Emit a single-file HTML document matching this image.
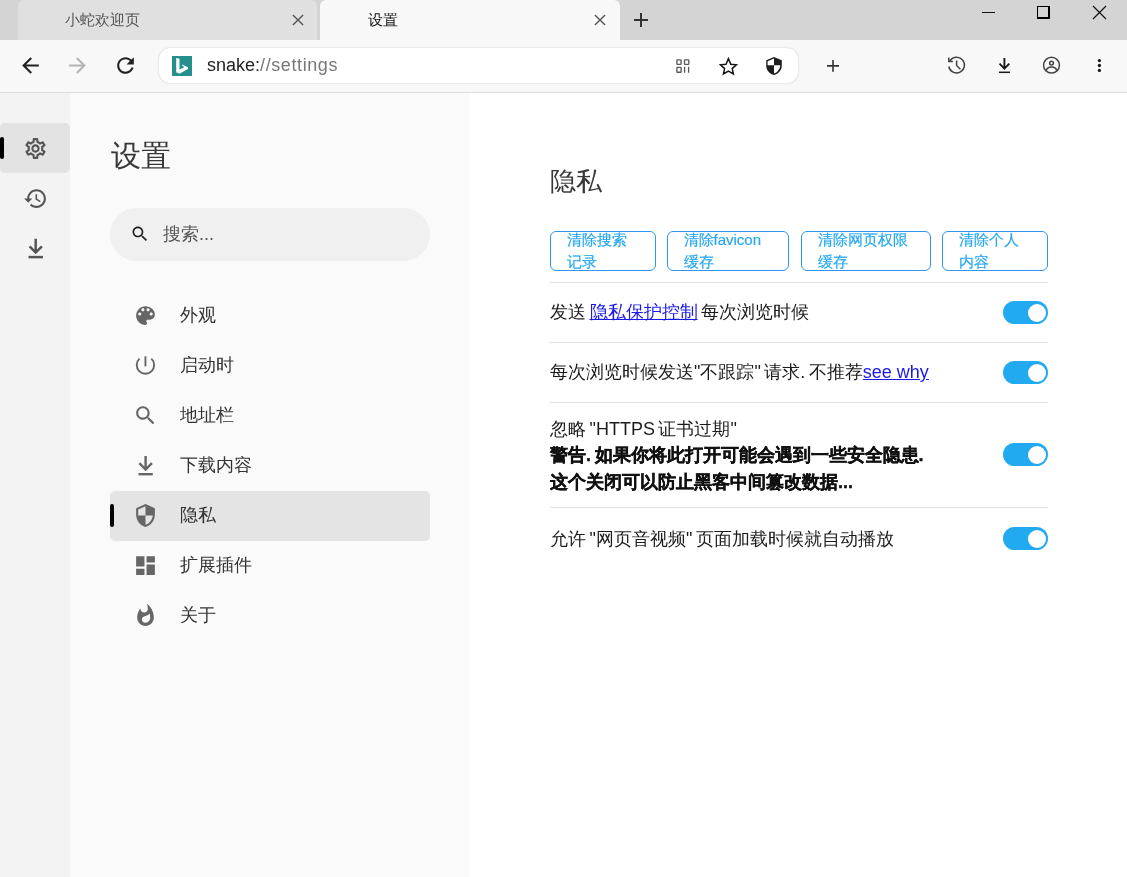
<!DOCTYPE html>
<html><head><meta charset="utf-8">
<style>
html,body{margin:0;padding:0;}
body{width:1127px;height:877px;overflow:hidden;position:relative;background:#fff;font-family:"Liberation Sans",sans-serif;}
.a{position:absolute;}
svg.a{display:block;}
#tabs{left:0;top:0;width:1127px;height:40px;background:#d4d4d4;}
.tab{top:0;height:40px;border-radius:6px 6px 0 0;}
#toolbar{left:0;top:40px;width:1127px;height:52px;background:#f8f8f8;border-bottom:1px solid #dcdcdc;}
#omni{left:159px;top:47.5px;width:639px;height:35.5px;background:#fff;border-radius:11px;box-shadow:0 0 3px rgba(0,0,0,.10),0 0 1px rgba(0,0,0,.18);}
#rail{left:0;top:93px;width:70px;height:784px;background:#f3f3f3;}
#side{left:70px;top:93px;width:400px;height:784px;background:#fafafa;}
.txt,.rtxt,.btn{white-space:nowrap;will-change:transform;}
.item{left:180px;font-size:18px;color:#333;line-height:20px;}
.row{left:550px;width:498px;border-top:1px solid #e0e0e0;}
.tog{left:1003px;width:45px;height:23px;border-radius:12px;background:#21aaf0;}
.tog::after{content:"";position:absolute;right:2px;top:2.5px;width:18.5px;height:18.5px;border-radius:50%;background:#fff;}
.btn{top:231px;height:38px;border:1px solid #2f96ec;border-radius:6px;color:#25a8f0;font-size:15px;line-height:21.5px;box-sizing:content-box;}
.btn span{position:absolute;left:15.5px;top:-3px;white-space:nowrap;-webkit-text-stroke:0.2px #25a8f0;}
.rtxt{font-size:18px;color:#1c1c1c;line-height:26px;white-space:nowrap;word-spacing:-1.5px;}
a{color:#1a1ae6;word-spacing:normal;}
.rtxt b{color:#111;-webkit-text-stroke:0.35px #111;}
</style></head><body>
<div id="tabs" class="a"></div>
<div class="a tab" style="left:18px;width:299px;background:#e0e0e0;"></div>
<div class="a tab" style="left:320px;width:300px;background:#f8f8f8;"></div>
<div class="a txt" style="left:65px;top:10px;font-size:15px;line-height:20px;color:#555;">小蛇欢迎页</div>
<div class="a txt" style="left:368px;top:10px;font-size:15px;line-height:20px;color:#111;">设置</div>
<svg class="a" style="left:291.5px;top:14px" width="12" height="12" viewBox="0 0 12 12"><path d="M0.9 0.9L11.1 11.1M11.1 0.9L0.9 11.1" stroke="#555" stroke-width="1.4"/></svg>
<svg class="a" style="left:594px;top:14px" width="12" height="12" viewBox="0 0 12 12"><path d="M0.9 0.9L11.1 11.1M11.1 0.9L0.9 11.1" stroke="#555" stroke-width="1.4"/></svg>
<svg class="a" style="left:633px;top:12px" width="16" height="16" viewBox="0 0 16 16"><path d="M8 1V15M1 8H15" stroke="#333" stroke-width="2"/></svg>
<!-- window controls -->
<svg class="a" style="left:981px;top:5px" width="16" height="16" viewBox="0 0 16 16"><path d="M1 7.5H14" stroke="#111" stroke-width="1"/></svg>
<div class="a" style="left:1037px;top:6px;width:10px;height:10px;border:1px solid #000;border-right-width:2.5px;border-bottom-width:2.5px;"></div>
<svg class="a" style="left:1092px;top:5px" width="16" height="16" viewBox="0 0 16 16"><path d="M1 1L14 14M14 1L1 14" stroke="#111" stroke-width="1.2"/></svg>

<div id="toolbar" class="a"></div>
<div id="omni" class="a"></div>

<!-- toolbar icons -->
<svg class="a" style="left:18px;top:53px" width="25" height="25" viewBox="0 0 24 24"><path fill="#222" d="M20 11H7.83l5.59-5.59L12 4l-8 8 8 8 1.41-1.41L7.83 13H20v-2z"/></svg>
<svg class="a" style="left:65px;top:53px" width="25" height="25" viewBox="0 0 24 24"><path fill="#b4b4b4" d="M12 4l-1.41 1.41L16.17 11H4v2h12.17l-5.58 5.59L12 20l8-8z"/></svg>
<svg class="a" style="left:113px;top:53px" width="25" height="25" viewBox="0 0 24 24"><path fill="#222" d="M17.65 6.35C16.2 4.9 14.21 4 12 4c-4.42 0-7.99 3.58-7.99 8s3.57 8 7.99 8c3.73 0 6.84-2.55 7.73-6h-2.08c-.82 2.33-3.04 4-5.65 4-3.31 0-6-2.69-6-6s2.69-6 6-6c1.66 0 3.14.69 4.22 1.78L13 11h7V4l-2.35 2.35z"/></svg>
<div class="a" style="left:172px;top:56px;width:20px;height:20px;background:#248f8c;"></div>
<svg class="a" style="left:172px;top:56px" width="20" height="20" viewBox="0 0 20 20"><path fill="#fff" d="M4.2 1.9L7.5 2.7V13.6L12.4 11.2L10.2 9.6L10 8.6L15.9 11.2V13.1L7.6 17.8L4.2 16.3Z"/></svg>
<div class="a txt" style="left:207px;top:54px;font-size:18px;line-height:22px;color:#222;">snake:<span style="color:#777;letter-spacing:0.6px">//settings</span></div>
<svg class="a" style="left:0;top:0" width="1127" height="93" viewBox="0 0 1127 93">
<g fill="none" stroke="#5a5a5a" stroke-width="1.35"><rect x="676.9" y="59.8" width="4.2" height="4.5" rx="0.5"/><rect x="684.5" y="59.8" width="4.3" height="4.5" rx="0.5"/><rect x="676.9" y="67.4" width="4.2" height="4.8" rx="0.5"/></g>
<path d="M684.6 66.8V72.8M688.6 66.8V72.8" stroke="#5a5a5a" stroke-width="1.3"/>
<path d="M728.4 58.6L730.8 64.2L736.4 64.8L732.2 68.6L733.4 73.9L728.4 71.1L723.4 73.9L724.6 68.6L720.4 64.8L726 64.2Z" fill="none" stroke="#151515" stroke-width="1.5" stroke-linejoin="miter"/>
<path fill="#1e1e1e" fill-rule="evenodd" d="M774 56.9L766.2 60.3V65.6C766.2 70.2 769.5 74.1 774 75.1C778.5 74.1 781.8 70.2 781.8 65.6V60.3Z M767.6 61.2L774 58.4V65.3H767.6Z M774 65.3H780.3C779.9 69.3 777.4 72.6 774 73.6Z"/>
<path d="M833 60V71.8M827 65.9H839" stroke="#333" stroke-width="1.6"/>
<g fill="none" stroke="#444" stroke-width="1.5"><path d="M949.8 61A7.9 7.9 0 1 1 948.8 66.5"/><path d="M956.6 60.4V65.5L960.4 69.2"/></g>
<path fill="none" stroke="#444" stroke-width="1.5" d="M948.8 57.6V61.6H952.9"/>
<g fill="none" stroke="#1a1a1a"><path d="M1004.4 58V68.3M999.5 63.6L1004.4 68.6L1009.3 63.6" stroke-width="1.9"/><path d="M999 72.3H1010" stroke-width="1.5"/></g>
<g fill="none" stroke="#444" stroke-width="1.5"><circle cx="1051.5" cy="65.2" r="7.9"/><circle cx="1051.5" cy="63.1" r="1.9"/><path d="M1046.1 71.3C1046.5 68.5 1048.8 67.1 1051.5 67.1S1056.5 68.5 1056.9 71.3"/></g>
<g fill="#1a1a1a"><circle cx="1099.4" cy="60.6" r="1.65"/><circle cx="1099.4" cy="65.5" r="1.65"/><circle cx="1099.4" cy="70.4" r="1.65"/></g>
</svg>
<div id="rail" class="a"></div>
<div id="side" class="a"></div>
<div class="a" style="left:0;top:123px;width:70px;height:49.5px;background:#e3e3e3;border-radius:5px;"></div>
<div class="a" style="left:0;top:137px;width:4px;height:22px;background:#000;border-radius:2px;"></div>
<svg class="a" style="left:23px;top:136px" width="25" height="25" viewBox="0 0 24 24"><path fill="#555" d="M19.43 12.98c.04-.32.07-.64.07-.98 0-.34-.03-.66-.07-.98l2.11-1.65c.19-.15.24-.42.12-.64l-2-3.46c-.09-.16-.26-.25-.44-.25-.06 0-.12.01-.17.03l-2.49 1c-.52-.4-1.08-.73-1.690-.98l-.38-2.65C14.46 2.18 14.25 2 14 2h-4c-.25 0-.46.18-.49.42l-.38 2.650c-.61.25-1.17.59-1.69.98l-2.49-1c-.06-.02-.12-.03-.18-.03-.17 0-.34.09-.43.25l-2 3.46c-.13.22-.07.49.12.64l2.11 1.65c-.04.32-.07.65-.07.98 0 .33.03.66.07.98l-2.11 1.65c-.19.15-.24.42-.12.64l2 3.46c.09.16.26.25.44.25.06 0 .12-.01.17-.03l2.49-1c.52.4 1.08.73 1.69.98l.38 2.65c.03.24.24.42.49.42h4c.25 0 .46-.18.49-.42l.38-2.65c.61-.25 1.17-.59 1.69-.98l2.49 1c.06.02.12.03.18.03.17 0 .34-.09.43-.25l2-3.46c.12-.22.07-.49-.12-.64l-2.11-1.65zm-1.98-1.71c.04.31.05.52.05.73 0 .21-.02.43-.05.73l-.14 1.13.89.7 1.08.84-.7 1.21-1.27-.51-1.04-.42-.9.68c-.43.32-.84.56-1.25.73l-1.06.43-.16 1.13-.2 1.35h-1.4l-.19-1.35-.16-1.13-1.06-.43c-.43-.18-.83-.41-1.23-.71l-.91-.7-1.060.43-1.27.51-.7-1.21 1.08-.84.89-.7-.14-1.13c-.03-.31-.05-.54-.05-.74s.02-.43.05-.73l.14-1.13-.89-.7-1.08-.84.7-1.21 1.27.51 1.04.42.9-.68c.43-.32.84-.56 1.25-.73l1.06-.43.16-1.13.2-1.35h1.39l.19 1.35.16 1.13 1.06.43c.43.18.83.41 1.23.71l.91.7 1.06-.43 1.27-.51.7 1.21-1.07.85-.89.7.14 1.13zM12 8c-2.21 0-4 1.79-4 4s1.79 4 4 4 4-1.79 4-4-1.79-4-4-4zm0 6c-1.1 0-2-.9-2-2s.9-2 2-2 2 .9 2 2-.9 2-2 2z"/></svg>
<svg class="a" style="left:23px;top:186px" width="25" height="25" viewBox="0 0 24 24"><path fill="#555" d="M13 3c-4.97 0-9 4.03-9 9H1l3.89 3.89.07.14L9 12H6c0-3.87 3.13-7 7-7s7 3.13 7 7-3.13 7-7 7c-1.93 0-3.68-.79-4.94-2.06l-1.42 1.42C8.27 19.99 10.51 21 13 21c4.97 0 9-4.03 9-9s-4.03-9-9-9zm-1 5v5l4.28 2.54.72-1.21-3.5-2.08V8H12z"/></svg>
<svg class="a" style="left:24px;top:236px" width="24" height="24" viewBox="0 0 24 24"><g fill="none" stroke="#555" stroke-width="2.5"><path d="M11.7 2.8V16.6M5.6 10.4L11.7 16.6L17.9 10.4"/><path d="M4.5 21.1H19"/></g></svg>

<div class="a txt" style="left:111px;top:136px;font-size:30px;line-height:40px;color:#383838;font-weight:300;">设置</div>
<div class="a" style="left:110px;top:208px;width:320px;height:53px;border-radius:27px;background:#f0f0f0;"></div>
<svg class="a" style="left:130px;top:224px" width="20" height="20" viewBox="0 0 24 24"><path fill="#222" d="M15.5 14h-.79l-.28-.27C15.41 12.59 16 11.11 16 9.5 16 5.91 13.09 3 9.5 3S3 5.91 3 9.5 5.91 16 9.5 16c1.61 0 3.090-.59 4.23-1.57l.27.28v.79l5 4.99L20.49 19l-4.99-5zm-6 0C7.01 14 5 11.99 5 9.5S7.01 5 9.5 5 14 7.01 14 9.5 11.99 14 9.5 14z"/></svg>
<div class="a txt" style="left:163px;top:223px;font-size:18px;line-height:22px;color:#555;">搜索...</div>

<div class="a" style="left:110px;top:491px;width:320px;height:50px;background:#e4e4e4;border-radius:5px;"></div>
<div class="a" style="left:110px;top:504px;width:4px;height:23px;background:#000;border-radius:2px;"></div>

<!-- sidebar items -->
<svg class="a" style="left:133px;top:303px" width="25" height="25" viewBox="0 0 24 24"><path fill="#666" d="M12 3c-4.97 0-9 4.03-9 9s4.03 9 9 9c.83 0 1.5-.67 1.5-1.5 0-.39-.15-.74-.39-1.01-.23-.26-.38-.61-.38-.99 0-.83.67-1.5 1.5-1.5H16c2.76 0 5-2.24 5-5 0-4.420-4.03-8-9-8zm-5.5 9c-.83 0-1.5-.67-1.5-1.5S5.67 9 6.5 9 8 9.67 8 10.5 7.33 12 6.5 12zm3-4C8.67 8 8 7.33 8 6.5S8.67 5 9.5 5s1.5.67 1.5 1.5S10.33 8 9.5 8zm5 0c-.83 0-1.5-.67-1.5-1.5S13.67 5 14.5 5s1.5.67 1.5 1.5S15.33 8 14.5 8zm3 4c-.83 0-1.5-.67-1.5-1.5S16.67 9 17.5 9s1.5.67 1.5 1.5-.67 1.5-1.5 1.5z"/></svg>
<div class="a txt item" style="top:305px;">外观</div>
<svg class="a" style="left:125px;top:345px" width="40" height="40" viewBox="0 0 40 40"><g fill="none" stroke="#666" stroke-width="1.9"><path d="M20.45 11.3V21.4"/><path d="M26.35 13.65A8.7 8.7 0 1 1 14.55 13.65"/></g></svg>
<div class="a txt item" style="top:355px;">启动时</div>
<svg class="a" style="left:133px;top:403px" width="25" height="25" viewBox="0 0 24 24"><path fill="#666" d="M15.5 14h-.79l-.28-.27C15.41 12.59 16 11.11 16 9.5 16 5.91 13.09 3 9.5 3S3 5.91 3 9.5 5.91 16 9.5 16c1.61 0 3.090-.59 4.23-1.57l.27.28v.79l5 4.99L20.49 19l-4.99-5zm-6 0C7.01 14 5 11.99 5 9.5S7.01 5 9.5 5 14 7.01 14 9.5 11.99 14 9.5 14z"/></svg>
<div class="a txt item" style="top:405px;">地址栏</div>
<svg class="a" style="left:134px;top:453px" width="24" height="24" viewBox="0 0 24 24"><g fill="none" stroke="#666" stroke-width="2.4"><path d="M11.6 3V16.6M5.4 10.1L11.6 16.6L17.9 10.1"/><path d="M4.5 21.2H18.8"/></g></svg>
<div class="a txt item" style="top:455px;">下载内容</div>
<svg class="a" style="left:133px;top:503px" width="25" height="25" viewBox="0 0 24 24"><path fill="#666" d="M12 1L3 5v6c0 5.55 3.84 10.74 9 12 5.16-1.26 9-6.45 9-12V5l-9-4zm0 10.99h7c-.53 4.12-3.28 7.79-7 8.94V12H5V6.3l7-3.11v8.8z"/></svg>
<div class="a txt item" style="top:505px;">隐私</div>
<svg class="a" style="left:133px;top:553px" width="25" height="25" viewBox="0 0 24 24"><path fill="#666" d="M3 13h8V3H3v10zm0 8h8v-6H3v6zm10 0h8V11h-8v10zm0-18v6h8V3h-8z"/></svg>
<div class="a txt item" style="top:555px;">扩展插件</div>
<svg class="a" style="left:133px;top:603px" width="25" height="25" viewBox="0 0 24 24"><path fill="#666" d="M13.5.67s.74 2.65.74 4.8c0 2.06-1.35 3.73-3.41 3.73-2.07 0-3.63-1.67-3.63-3.73l.03-.36C5.21 7.51 4 10.62 4 14c0 4.42 3.58 8 8 8s8-3.58 8-8C20 8.61 17.41 3.8 13.5.67zM11.71 19c-1.78 0-3.22-1.4-3.22-3.14 0-1.62 1.05-2.76 2.81-3.12 1.77-.36 3.6-1.21 4.62-2.58.39 1.29.59 2.650.59 4.04 0 2.65-2.15 4.8-4.8 4.8z"/></svg>
<div class="a txt item" style="top:605px;">关于</div>

<!-- main content -->
<div class="a txt" style="left:550px;top:163px;font-size:26px;line-height:36px;color:#383838;font-weight:300;">隐私</div>
<div class="a btn" style="left:550px;width:104px;"><span>清除搜索<br>记录</span></div>
<div class="a btn" style="left:667px;width:120px;"><span>清除favicon<br>缓存</span></div>
<div class="a btn" style="left:801px;width:128px;"><span>清除网页权限<br>缓存</span></div>
<div class="a btn" style="left:942px;width:104px;"><span>清除个人<br>内容</span></div>

<div class="a row" style="top:282px;height:60px;"></div>
<div class="a rtxt" style="left:550px;top:299px;">发送 <a href="#">隐私保护控制</a> 每次浏览时候</div>
<div class="a tog" style="top:301px;"></div>
<div class="a row" style="top:342px;height:60px;"></div>
<div class="a rtxt" style="left:550px;top:359px;">每次浏览时候发送"不跟踪" 请求. 不推荐<a href="#">see why</a></div>
<div class="a tog" style="top:361px;"></div>
<div class="a row" style="top:402px;height:105px;"></div>
<div class="a rtxt" style="left:550px;top:415.5px;line-height:26.4px;">忽略 "HTTPS 证书过期"<br><b>警告. 如果你将此打开可能会遇到一些安全隐患.<br>这个关闭可以防止黑客中间篡改数据...</b></div>
<div class="a tog" style="top:443px;"></div>
<div class="a row" style="top:507px;height:60px;"></div>
<div class="a rtxt" style="left:550px;top:525.5px;">允许 "网页音视频" 页面加载时候就自动播放</div>
<div class="a tog" style="top:527px;"></div>
</body></html>
